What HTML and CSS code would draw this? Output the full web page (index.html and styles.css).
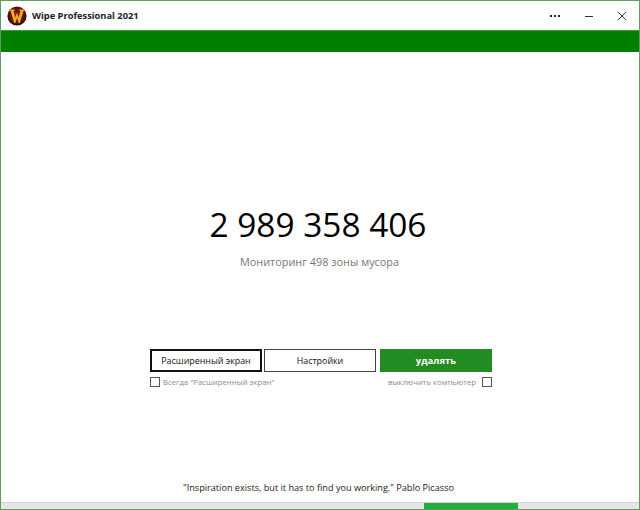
FILE: index.html
```html
<!DOCTYPE html>
<html lang="ru">
<head>
<meta charset="utf-8">
<title>Wipe Professional 2021</title>
<link rel="stylesheet" href="styles.css">
</head>
<body>
<div class="window">
  <header class="titlebar">
    <svg class="logo" width="20" height="20" viewBox="0 0 20 20">
      <defs>
        <radialGradient id="ball" cx="50%" cy="45%" r="55%">
          <stop offset="0" stop-color="#8a140c"/>
          <stop offset="0.7" stop-color="#6a0e0a"/>
          <stop offset="1" stop-color="#141010"/>
        </radialGradient>
      </defs>
      <circle cx="10" cy="10" r="9.6" fill="url(#ball)"/>
      <path d="M2.5 3.5 H7.5 V5 H6.6 L8.4 11.5 L10 6.5 L11.6 11.5 L13.4 5 H12.5 V3.5 H17.5 V5 H16.4 L12.8 17 H11.6 L10 12 L8.4 17 H7.2 L3.6 5 H2.5 Z" fill="#e9ad22"/>
    </svg>
    <span class="app-title">Wipe Professional 2021</span>
    <div class="controls">
      <svg class="ctl ctl-more" width="12" height="4" viewBox="0 0 12 4"><g fill="#222"><rect x="1" y="1" width="2" height="2"/><rect x="5" y="1" width="2" height="2"/><rect x="9" y="1" width="2" height="2"/></g></svg>
      <svg class="ctl ctl-min" width="10" height="10" viewBox="0 0 10 10"><path d="M1 5.5 H9" stroke="#333" stroke-width="1"/></svg>
      <svg class="ctl ctl-close" width="10" height="10" viewBox="0 0 10 10"><path d="M1 1 L9 9 M9 1 L1 9" stroke="#333" stroke-width="1" fill="none"/></svg>
    </div>
  </header>
  <div class="band"></div>
  <main class="content">
    <div class="count">2 989 358 406</div>
    <div class="status">Мониторинг 498 зоны мусора</div>
    <div class="actions">
      <button class="btn btn-focus">Расширенный экран</button>
      <button class="btn">Настройки</button>
      <button class="btn btn-primary">удалять</button>
    </div>
    <div class="options">
      <label class="opt"><span class="check"></span>Всегда "Расширенный экран"</label>
      <label class="opt">выключить компьютер<span class="check"></span></label>
    </div>
    <p class="quote">"Inspiration exists, but it has to find you working." Pablo Picasso</p>
  </main>
  <div class="progress"><div class="progress-fill"></div></div>
</div>
</body>
</html>
```
FILE: styles.css
```css
* { box-sizing: border-box; }
html, body { margin: 0; padding: 0; background: #fff; }
.window {
  width: 640px;
  height: 510px;
  border: 1px solid #5f9c5f;
  display: flex;
  flex-direction: column;
  overflow: hidden;
  font-family: "Open Sans", sans-serif;
}
.titlebar {
  height: 29px;
  display: flex;
  align-items: center;
  padding-left: 6px;
  flex: none;
}
.logo { flex: none; margin-top: 1px; }
.app-title {
  margin-left: 5px;
  font-size: 9.3px;
  font-weight: 700;
  color: #222;
}
.controls {
  margin-left: auto;
  display: flex;
  align-items: center;
  padding-right: 12px;
}
.ctl { display: block; }
.ctl-more { margin-right: 23px; }
.ctl-min { margin-right: 23px; }
.band {
  height: 22px;
  background: #008000;
  border-top: 1px solid #3f9a3f;
  flex: none;
}
.content {
  flex: 1;
  display: flex;
  flex-direction: column;
  align-items: center;
  min-height: 0;
}
.count {
  margin-top: 148px;
  margin-right: 4px;
  height: 48px;
  line-height: 48px;
  font-size: 33.4px;
  font-weight: 500;
  color: #000;
}
.status {
  margin-top: 6px;
  margin-right: 1px;
  font-size: 10.9px;
  line-height: 16px;
  color: #777;
}
.actions {
  margin-top: 79px;
  margin-left: 2px;
  display: flex;
  gap: 2px;
}
.btn {
  width: 112px;
  height: 23px;
  margin: 0;
  padding: 0;
  background: #fff;
  border: 1px solid #444;
  font-family: "Open Sans", sans-serif;
  font-size: 8.9px;
  font-weight: 500;
  color: #111;
}
.btn-focus { border: 2px solid #111; }
.btn-primary {
  margin-left: 2px;
  background: #228b22;
  border-color: #228b22;
  color: #fff;
  font-size: 9.5px;
  font-weight: 700;
}
.options {
  margin-top: 4px;
  margin-left: 2px;
  width: 342px;
  display: flex;
  justify-content: space-between;
}
.opt {
  display: flex;
  align-items: center;
  gap: 3px;
  height: 11px;
  font-size: 7.75px;
  color: #8c8c8c;
}
.opt:last-child { gap: 6px; }
.check {
  width: 10px;
  height: 10px;
  border: 1px solid #555;
  background: #fff;
  flex: none;
}
.quote {
  margin: auto 3px 0 0;
  padding-bottom: 7px;
  font-size: 9.15px;
  line-height: 14px;
  color: #222;
}
.progress {
  height: 7px;
  flex: none;
  background: #e6e6e6;
  border-top: 1px solid #d4d4d4;
  display: flex;
}
.progress-fill {
  margin-left: 423px;
  width: 94px;
  background: #1fae3c;
}
```
